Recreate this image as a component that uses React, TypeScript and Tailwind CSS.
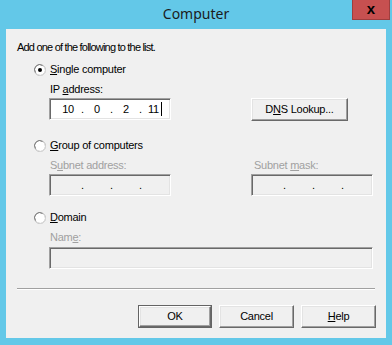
import React from "react";

const sunken =
  "border border-t-[#a0a0a0] border-l-[#a0a0a0] border-b-white border-r-white shadow-[inset_1px_1px_0_#696969,inset_-1px_-1px_0_#e3e3e3]";

const raised =
  "border border-t-white border-l-white border-b-[#696969] border-r-[#696969] shadow-[inset_-1px_-1px_0_#a0a0a0,inset_1px_1px_0_#e3e3e3] bg-[#f0f0f0]";

function Radio({ checked }: { checked?: boolean }) {
  return (
    <svg width="12" height="12" viewBox="0 0 12 12" className="shrink-0">
      <circle cx="6" cy="6" r="5.5" fill="#ffffff" stroke="#b4b4b4" strokeWidth="1" />
      <path d="M1.6 8.6 A5 5 0 0 1 8.6 1.6" fill="none" stroke="#7a7a7a" strokeWidth="1" />
      <path d="M10.4 3.4 A5 5 0 0 1 3.4 10.4" fill="none" stroke="#dcdcdc" strokeWidth="1" />
      {checked && <circle cx="6" cy="6" r="2" fill="#000000" />}
    </svg>
  );
}

function RadioRow({ checked, children }: { checked?: boolean; children: React.ReactNode }) {
  return (
    <div className="flex items-center h-[13px] pl-[28px]">
      <Radio checked={checked} />
      <span className="ml-[4px] leading-[13px]">{children}</span>
    </div>
  );
}

function IpField({ values, width, disabled }: { values: string[]; width: string; disabled?: boolean }) {
  return (
    <div className={`${sunken} ${width} h-[22px] flex items-center pl-[6px] ${disabled ? "bg-[#f0f0f0]" : "bg-white"}`}>
      {values.map((v, i) => (
        <React.Fragment key={i}>
          <span className="w-[24px] text-center leading-[13px] flex justify-center items-center">
            {v}
            {i === 3 && !disabled && <span className="ml-[2px] inline-block w-px h-[14px] bg-black" />}
          </span>
          {i < 3 && <span className="w-[5px] text-center leading-[13px]">.</span>}
        </React.Fragment>
      ))}
    </div>
  );
}

function Button({ children, width, isDefault }: { children: React.ReactNode; width: string; isDefault?: boolean }) {
  if (isDefault) {
    return (
      <div className={`${width} h-[23px] border border-[#646464] flex`}>
        <div className={`${raised} flex-1 flex items-center justify-center`}>{children}</div>
      </div>
    );
  }
  return <div className={`${raised} ${width} h-[23px] flex items-center justify-center`}>{children}</div>;
}

export default function App() {
  return (
    <div
      className="w-[392px] h-[345px] bg-[#63c8e8] relative overflow-hidden text-[11px] tracking-[-0.25px] text-black"
      style={{ fontFamily: '"Liberation Sans", Arial, sans-serif' }}
    >
      {/* title bar */}
      <div className="h-[29px] flex items-center justify-center">
        <span
          className="text-[14px] tracking-normal text-[#1b1b1b] -mt-[2px]"
          style={{ fontFamily: '"Noto Sans", "Open Sans", sans-serif' }}
        >
          Computer
        </span>
      </div>
      <div className="absolute left-[352px] top-0 w-[38px] h-[20px] bg-[#c75050] border border-t-0 border-[#9e3e3e] flex items-center justify-center">
        <span className="text-[15px] font-bold leading-none -mt-[3px] tracking-normal">x</span>
      </div>

      {/* client area */}
      <div className="mx-[6px] h-[309px] bg-[#f0f0f0] flex flex-col">
        <div className="mt-[12px] pl-[11px] h-[13px] leading-[13px] tracking-[-0.8px]">
          Add one of the following to the list.
        </div>

        <div className="mt-[9px]">
          <RadioRow checked>
            <u>S</u>ingle computer
          </RadioRow>
        </div>
        <div className="mt-[7px] pl-[44px] h-[13px] leading-[13px]">
          IP <u>a</u>ddress:
        </div>
        <div className="mt-[2px] pl-[43px] flex">
          <IpField values={["10", "0", "2", "11"]} width="w-[122px]" />
          <div className="ml-[80px]">
            <Button width="w-[97px]">
              D<u>N</u>S Lookup...
            </Button>
          </div>
        </div>

        <div className="mt-[18px]">
          <RadioRow>
            <u>G</u>roup of computers
          </RadioRow>
        </div>
        <div className="mt-[7px] flex h-[13px] leading-[13px] text-[#a0a0a0]">
          <span className="pl-[44px] w-[248px]">
            S<u>u</u>bnet address:
          </span>
          <span>
            Subnet <u>m</u>ask:
          </span>
        </div>
        <div className="mt-[2px] pl-[43px] flex">
          <IpField values={["", "", "", ""]} width="w-[122px]" disabled />
          <div className="ml-[80px]">
            <IpField values={["", "", "", ""]} width="w-[122px]" disabled />
          </div>
        </div>

        <div className="mt-[15px]">
          <RadioRow>
            <u>D</u>omain
          </RadioRow>
        </div>
        <div className="mt-[7px] pl-[44px] h-[13px] leading-[13px] text-[#a0a0a0]">
          Nam<u>e</u>:
        </div>
        <div className="mt-[3px] pl-[43px]">
          <div className={`${sunken} w-[324px] h-[22px] bg-[#f0f0f0]`} />
        </div>

        <div className="mt-[19px] mx-[11px] h-[2px] border-t border-t-[#a0a0a0] border-b border-b-white" />

        <div className="mt-[15px] flex justify-end gap-[7px] pr-[10px]">
          <Button width="w-[74px]" isDefault>
            OK
          </Button>
          <Button width="w-[75px]">Cancel</Button>
          <Button width="w-[75px]">
            <u>H</u>elp
          </Button>
        </div>
      </div>
    </div>
  );
}
